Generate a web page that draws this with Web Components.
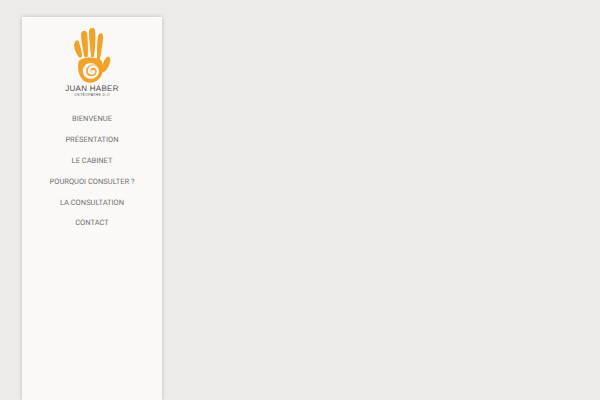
<!DOCTYPE html>
<html lang="fr">
<head>
<meta charset="utf-8">
<title>Juan Haber</title>
<style>
  html, body { margin: 0; height: 100%; }
  body { background: #edeae7; overflow: hidden; }
</style>
</head>
<body>
<site-sidebar>
  <site-logo></site-logo>
  <nav-item>Bienvenue</nav-item>
  <nav-item>Présentation</nav-item>
  <nav-item>Le cabinet</nav-item>
  <nav-item>Pourquoi consulter ?</nav-item>
  <nav-item>La consultation</nav-item>
  <nav-item>Contact</nav-item>
</site-sidebar>

<script>
class SiteSidebar extends HTMLElement {
  constructor() {
    super();
    this.attachShadow({ mode: "open" });
    this.shadowRoot.innerHTML = `
      <style>
        :host {
          display: block;
          box-sizing: border-box;
          width: 140px;
          height: 383px;
          margin: 17px 0 0 22px;
          background: #faf9f7;
          box-shadow: 0 0 4px rgba(0,0,0,0.2);
        }
        .items {
          display: flex;
          flex-direction: column;
        }
      </style>
      <div class="items"><slot></slot></div>
    `;
  }
}

class SiteLogo extends HTMLElement {
  constructor() {
    super();
    this.attachShadow({ mode: "open" });
    this.shadowRoot.innerHTML = `
      <style>
        :host {
          display: flex;
          flex-direction: column;
          align-items: center;
          height: 81.4px;
          padding-top: 11px;
          color: #555;
        }
        svg { display: block; width: 38px; height: 56px; }
        .name {
          font: 8px/9px "Liberation Sans", sans-serif;
          letter-spacing: .3px;
          text-rendering: geometricPrecision;
          white-space: nowrap;
          color: #4d4a48;
        }
        .sub {
          font: 3.5px/4px "Liberation Sans", sans-serif;
          letter-spacing: .35px;
          white-space: nowrap;
        }
      </style>
      <svg viewBox="0 0 38 56" fill="#f1a229">
        <path d="M1 17 C2 12 5 11 6 14 C7 18 9 24 9 28 C9 30 6 30 5 28 C3 25 1 21 1 17 Z"/>
        <path d="M8 6 C9 2 13 2 14 5 C15 12 15 21 15 27 C15 30 12 30 11 28 C10 21 8 12 8 6 Z"/>
        <path d="M16 3 C17 -1 21 -1 22 2 C23 10 22 21 21 28 C20 30 18 30 18 28 C17 20 16 11 16 3 Z"/>
        <path d="M25 8 C27 4 30 5 30 8 C30 16 28 25 27 31 C26 33 24 32 24 30 C24 23 24 14 25 8 Z"/>
        <path d="M34 29 C37 28 38 31 37 34 C36 38 34 42 31 44 C29 45 28 42 29 40 C30 36 31 31 34 29 Z"/>
        <path fill-rule="evenodd" d="M6 33 C10 28 24 29 28 32 C31 37 31 46 26 51 C21 56 13 56 9 51 C5 46 4 38 6 33 Z
          M18 35 C12 35 9 40 10 45 C11 50 18 53 23 49 C27 46 27 40 23 38 C19 36 14 39 15 44 C16 47 20 48 22 45 C23 43 21 41 19 42 C18 43 18 44 19 45 C17 44 17 41 19 40 C22 39 25 42 23 46 C21 49 16 49 14 46 C12 42 14 38 18 37 C20 36 22 37 24 38 C22 36 20 35 18 35 Z"/>
      </svg>
      <div class="name">JUAN HABER</div>
      <div class="sub">OSTÉOPATHE D.O</div>
    `;
  }
}

class NavItem extends HTMLElement {
  constructor() {
    super();
    this.attachShadow({ mode: "open" });
    this.shadowRoot.innerHTML = `
      <style>
        :host {
          display: block;
          height: 20.8px;
          text-align: center;
          font: 7.5px/20.8px Roboto, sans-serif;
          text-rendering: geometricPrecision;
          text-transform: uppercase;
          color: #737170;
          white-space: nowrap;
        }
      </style>
      <slot></slot>
    `;
  }
}

customElements.define("site-sidebar", SiteSidebar);
customElements.define("site-logo", SiteLogo);
customElements.define("nav-item", NavItem);
</script>
</body>
</html>
